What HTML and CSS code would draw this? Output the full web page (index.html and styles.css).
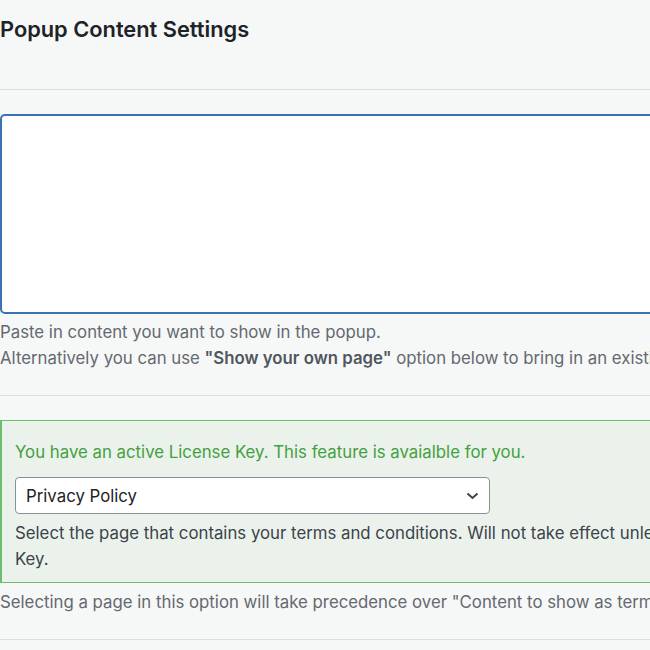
FILE: index.html
```html
<!DOCTYPE html>
<html>
<head>
    <title>Popup Content Settings</title>
    <link rel="stylesheet" href="styles.css">
</head>
<body>
    <div class="wrap">
        <h2>Popup Content Settings</h2>
        <hr>

        <textarea class="content-box"></textarea>
        <p class="description">
            Paste in content you want to show in the popup.<br>
            Alternatively you can use <strong>"Show your own page"</strong> option below to bring in an existing page as the popup content.
        </p>
        <hr class="gap">

        <div class="license-box">
            <p class="license-ok">You have an active License Key. This feature is avaialble for you.</p>
            <div class="select-wrap">
                <select>
                    <option>Privacy Policy</option>
                </select>
                <svg class="chevron" width="13" height="8" viewBox="0 0 13 8">
                    <path d="M1.5 1.5 L6.5 6 L11.5 1.5" fill="none" stroke="#3c434a" stroke-width="2"/>
                </svg>
            </div>
            <p class="help">Select the page that contains your terms and conditions. Will not take effect unless you have an active License Key.</p>
        </div>
        <p class="description note">Selecting a page in this option will take precedence over "Content to show as terms and conditions" above.</p>
        <hr class="gap">
    </div>
</body>
</html>
```

FILE: styles.css
```css
body {
    margin: 0;
    background: #f6f7f7;
    font-family: Inter, "Liberation Sans", Arial, sans-serif;
    color: #1d2327;
    overflow: hidden;
}
.wrap {
    width: 940px;
}
h2 {
    font-size: 21.8px;
    line-height: 30px;
    margin: 14px 0 0;
    font-weight: 600;
    color: #1d2327;
}
hr {
    border: none;
    border-top: 1px solid #dcdcde;
    margin: 45px 0 0;
}
hr.gap {
    margin: 24px 0 0;
}
.content-box {
    display: block;
    box-sizing: border-box;
    width: 100%;
    height: 200px;
    margin-top: 24px;
    border: 2px solid #3b73b2;
    border-radius: 5px;
    background: #fff;
    resize: none;
}
.description {
    margin: 5px 0 0;
    font-size: 16.8px;
    line-height: 26px;
    color: #646970;
}
.description strong {
    font-weight: 600;
    color: #50575e;
}
.license-box {
    margin-top: 24px;
    border: 1px solid #6cbf6a;
    border-left-width: 2px;
    background: #ebf2ec;
    padding: 18px 14px 10px 13px;
}
.license-ok {
    margin: 0;
    font-size: 16.8px;
    line-height: 26px;
    color: #44a03e;
}
.select-wrap {
    position: relative;
    width: 475px;
    margin-top: 12px;
}
.select-wrap select {
    -webkit-appearance: none;
    appearance: none;
    width: 100%;
    height: 37px;
    padding: 0 10px;
    border: 1px solid #8c8f94;
    border-radius: 4px;
    background: #fff;
    font-family: inherit;
    font-size: 16.8px;
    color: #1d2327;
}
.chevron {
    position: absolute;
    right: 11px;
    top: 15px;
    pointer-events: none;
}
.help {
    margin: 6px 0 0;
    font-size: 16.8px;
    line-height: 26px;
    color: #3c434a;
}
.note {
    margin-top: 6px;
}
```
